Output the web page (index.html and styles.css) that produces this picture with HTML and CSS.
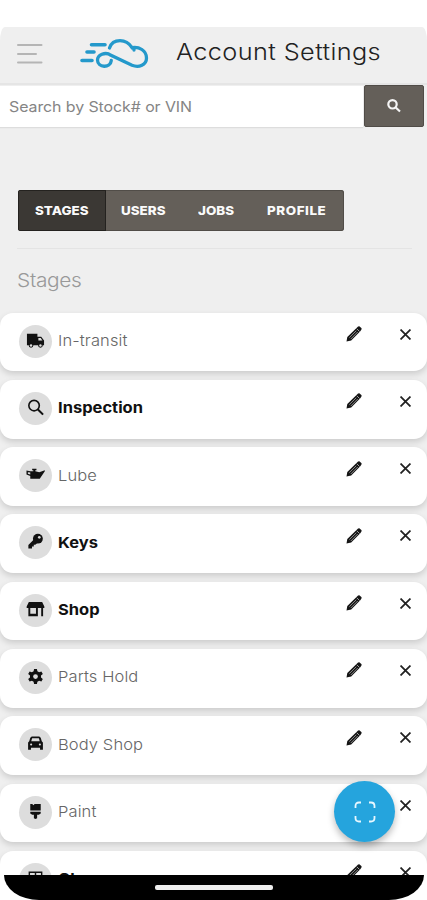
FILE: index.html
```
<!DOCTYPE html>
<html lang="en">
<head>
<meta charset="utf-8">
<title>Account Settings</title>
<link rel="stylesheet" href="styles.css">
</head>
<body>
<div class="screen">
  <header class="header">
    <svg class="menu" width="26" height="22" viewBox="0 0 26 22"><path d="M1 2H24.500M1 11H19M1 19.500H24.500"/></svg>
    <svg class="logo" width="70" height="32" viewBox="0 0 70 32"><path d="M11.500 6.800H25M7 14H14M2 22.500H12" stroke-width="3.600"/><path d="M29.500 10C31 5.500 35 2.700 40 2.700C45 2.700 49 5 52 9.600C59 8.300 66.500 12.500 66.500 20C66.500 27 59 30 52 27.300L31 17.300C25 13 17.500 17.500 17.500 22C17.500 30 30.500 30.500 31.300 22.500M52 9.600C53.500 10 54 11 54 12" stroke-width="3.300"/></svg>
    <h1 class="title">Account Settings</h1>
  </header>
  <form class="search">
    <div class="field"><span class="hint">Search by Stock# or VIN</span></div>
    <div class="go"><svg width="16" height="16" viewBox="0 0 16 16"><circle cx="6.500" cy="6.300" r="4.200"/><path d="M9.700 9.500L14 13.500"/></svg></div>
  </form>
  <nav class="tabs">
    <div class="tab active"><span>STAGES</span></div><div class="tab users"><span>USERS</span></div><div class="tab jobs"><span>JOBS</span></div><div class="tab profile"><span>PROFILE</span></div>
  </nav>
  <h2 class="section"><span>Stages</span></h2>
  <main class="list">
    <div class="card"><div class="badge"><svg viewBox="0 0 20 20"><path d="M1 3H12V6H16L19 10V15H17.700A2.500 2.500 0 0 1 12.700 15H7.800A2.500 2.500 0 0 1 2.800 15H1Z"/><path d="M13 7.300H15.500L17.300 10H13Z" fill="#ddd"/><circle cx="5.300" cy="15.200" r="1.300" fill="#ddd"/><circle cx="15.200" cy="15.200" r="1.300" fill="#ddd"/></svg></div><span class="label">In-transit</span><svg class="edit"><use href="#pencil"/></svg><svg class="close"><use href="#cross"/></svg></div>
    <div class="card"><div class="badge"><svg viewBox="0 0 20 20"><circle cx="8.500" cy="8" r="5.500" fill="none" stroke="#111" stroke-width="1.700"/><path d="M12.300 11.800L18 17.500" stroke="#111" stroke-width="2.200"/></svg></div><span class="label strong">Inspection</span><svg class="edit"><use href="#pencil"/></svg><svg class="close"><use href="#cross"/></svg></div>
    <div class="card"><div class="badge"><svg viewBox="0 0 20 20"><path d="M6.500 4H11V5.500H9.800V6.500L14 7.500L19.800 5.500V6.700L14.500 14.500H4.500V11.500L.5 10V5.700L4.500 6.500L7.700 6.500V5.500H6.500Z"/><path d="M2 7.500L4.500 8V10L2 9.200Z" fill="#ddd"/></svg></div><span class="label">Lube</span><svg class="edit"><use href="#pencil"/></svg><svg class="close"><use href="#cross"/></svg></div>
    <div class="card"><div class="badge"><svg viewBox="0 0 20 20"><circle cx="12.500" cy="7" r="5.200"/><path d="M8.500 7.700L2.500 13.700V17.300H6.300V15.300H8.200V13.300H9.800L12.500 11Z"/><circle cx="14" cy="5.600" r="1.400" fill="#ddd"/></svg></div><span class="label strong">Keys</span><svg class="edit"><use href="#pencil"/></svg><svg class="close"><use href="#cross"/></svg></div>
    <div class="card"><div class="badge"><svg viewBox="0 0 20 20"><path d="M3 2H17L19.300 6.800V8.500H.700V6.800ZM2.500 8H4.500V14.500H10.500V8H12.500V17H2.500ZM16 8H18V17H16Z"/></svg></div><span class="label strong">Shop</span><svg class="edit"><use href="#pencil"/></svg><svg class="close"><use href="#cross"/></svg></div>
    <div class="card"><div class="badge"><svg viewBox="0 0 20 20"><path d="M8.500 2H11.500L12 4.500L13.800 5.500L16.200 4.700L17.700 7.300L15.800 9V11L17.700 12.700L16.200 15.300L13.800 14.500L12 15.500L11.500 18H8.500L8 15.500L6.200 14.500L3.800 15.300L2.300 12.700L4.200 11V9L2.300 7.300L3.800 4.700L6.200 5.500L8 4.500Z"/><circle cx="10" cy="10" r="2.500" fill="#ddd"/></svg></div><span class="label">Parts Hold</span><svg class="edit"><use href="#pencil"/></svg><svg class="close"><use href="#cross"/></svg></div>
    <div class="card"><div class="badge"><svg viewBox="0 0 20 20"><path fill-rule="evenodd" d="M6 2.500H14L15.500 4L16.600 7.500L17.800 9V16.500H14.800V14.500H5.200V16.500H2.200V9L3.400 7.500L4.500 4ZM6.500 4.500L5.500 7.500H14.500L13.500 4.500Z"/><circle cx="5.400" cy="11" r="1.100" fill="#ddd"/><circle cx="14.600" cy="11" r="1.100" fill="#ddd"/></svg></div><span class="label">Body Shop</span><svg class="edit"><use href="#pencil"/></svg><svg class="close"><use href="#cross"/></svg></div>
    <div class="card"><div class="badge"><svg viewBox="0 0 20 20"><path d="M4.500 2H6.500L8 3.500L9 2H15.500V9H4.500ZM4.500 10.200H15.500V12L13.500 13.500H11.700V17L10 18L8.300 17V13.500H6.500L4.500 12Z"/></svg></div><span class="label">Paint</span><svg class="edit"><use href="#pencil"/></svg><svg class="close"><use href="#cross"/></svg></div>
    <div class="card"><div class="badge"><svg viewBox="0 0 20 20"><path d="M3.500 9V3.500H16.500V17H3.500V9H16.500M10 3.500V9" fill="none" stroke="#111" stroke-width="1.500"/></svg></div><span class="label strong">Cleanup</span><svg class="edit"><use href="#pencil"/></svg><svg class="close"><use href="#cross"/></svg></div>
  </main>
  <div class="fab"><svg width="24" height="24" viewBox="0 0 24 24"><path d="M2.500 8V6Q2.500 2.500 6 2.500H8M16 2.500H18Q21.500 2.500 21.500 6V8M21.500 16V18Q21.500 21.500 18 21.500H16M8 21.500H6Q2.500 21.500 2.500 18V16"/></svg></div>
  <footer class="bottom"><div class="homebar"><div class="handle"></div></div></footer>
</div>
<svg class="defs"><symbol id="pencil" viewBox="0 0 16 16"><path d="M.500 15.500L1.300 11L10.800 1.800Q12.300 .100 13.600 .400L15.600 2.300Q16 3.500 14.300 5.200L5.200 14.500Z"/><path d="M3.300 11.600L10.300 4.700M4.800 13L11.700 6" stroke="#aaa" stroke-width=".8"/><path d="M10.800 2.800L13.500 5.500" stroke="#fff" stroke-width=".6"/></symbol><symbol id="cross" viewBox="0 0 10 10"><path d="M.5 .5L9.500 9.500M9.500 .5L.5 9.500" stroke="#222" stroke-width="1.600"/></symbol></svg>
</body>
</html>
```
FILE: styles.css
```
* { box-sizing: border-box; }
body { margin: 0; background: #fff; font-family: Inter, sans-serif; }
.screen { position: relative; height: 900px; padding-top: 27px; overflow: hidden; }
.screen::before { content: ""; position: absolute; inset: 27px 0 25px; background: #efefef; border-radius: 5px 5px 0 0 / 14px 14px 0 0; }
.header, .search, .tabs, .section, .list { position: relative; }
.header { display: flex; align-items: center; height: 58px; padding: 0 0 2px 17px; border-bottom: 2px solid #e5e5e5; }
.menu { fill: none; stroke: #b5b5b5; stroke-width: 2; stroke-linecap: round; }
.logo { margin-left: 37px; fill: none; stroke: #2499cb; stroke-linecap: round; }
.title, .hint, .label, .tab span, .section span { transform: scaleX(1.1); transform-origin: left; white-space: nowrap; }
.title { margin: 0 0 4px 26px; color: #222; font-size: 23px; line-height: 30px; font-weight: 300; letter-spacing: .35px; }
.search { display: flex; height: 42px; padding-right: 3px; }
.field { flex: 1; display: flex; align-items: center; margin: 1px 1px 0 0; padding-left: 9px; background: #fff; box-shadow: 0 1px 1px #ddd; }
.hint { color: #858585; font-size: 14.5px; letter-spacing: -.08px; }
.go { display: grid; place-items: center; width: 60px; background: #645f59; border: 1px solid #504c47; border-radius: 2px; }
.go svg { fill: none; stroke: #f5f5f5; stroke-width: 2.2; }
.tabs { display: flex; width: 326px; height: 41px; margin: 63px 0 0 18px; overflow: hidden; background: #645f59; border-radius: 3px; box-shadow: inset 0 0 0 1px #514d48; }
.tab { display: flex; align-items: center; padding: 0 0 1px 15px; color: #fafafa; font-size: 12.2px; font-weight: 800; }
.active { width: 88px; padding-left: 17px; background: #3b3834; box-shadow: inset 0 0 0 1px #24221f; }
.users { width: 77px; }
.jobs { width: 68px; }
.profile { padding-left: 16px; letter-spacing: .5px; }
.section { margin: 17px 15px 0 17px; padding-top: 19px; height: 64.5px; border-top: 1px solid #e4e4e4; color: #999; font-size: 19px; line-height: 25px; font-weight: 300; letter-spacing: -.3px; }
.section span { display: inline-block; }
.list { display: flex; flex-direction: column; gap: 8.5px; }
.card { display: flex; flex: none; height: 58.8px; padding-left: 19px; background: #fff; border-radius: 13px; box-shadow: 0 3px 6px #00000026; }
.badge { display: grid; place-items: center; width: 33px; height: 33px; margin-top: 12px; padding-bottom: 2px; background: #ddd; border-radius: 50%; }
.badge svg { width: 19px; height: 19px; fill: #111; }
.label { width: 130px; margin: 17.5px 0 0 6px; color: #666; font-size: 15px; line-height: 21px; font-weight: 300; letter-spacing: .1px; }
.strong { color: #111; font-weight: 700; letter-spacing: 0; }
.edit { width: 16px; height: 16px; margin: 13.5px 0 0 158px; fill: #151515; }
.close { width: 11px; height: 11px; margin: 16px 0 0 38px; }
.fab { position: absolute; left: 334px; top: 781px; width: 61px; height: 61px; display: grid; place-items: center; background: #25a4dd; border-radius: 50%; box-shadow: 0 4px 7px #0004; }
.fab svg { fill: none; stroke: #e8f7ff; stroke-width: 1.8; }
.bottom { position: absolute; left: 0; bottom: 0; width: 100%; height: 25px; padding: 0 3px 0 4px; background: #fff; }
.homebar { display: flex; justify-content: center; height: 25px; padding: 10px 0 0; background: #000; border-radius: 0 0 35px 35px / 0 0 25px 25px; }
.handle { width: 118px; height: 5px; background: #eee; border-radius: 2px; }
.defs { display: none; }
```
